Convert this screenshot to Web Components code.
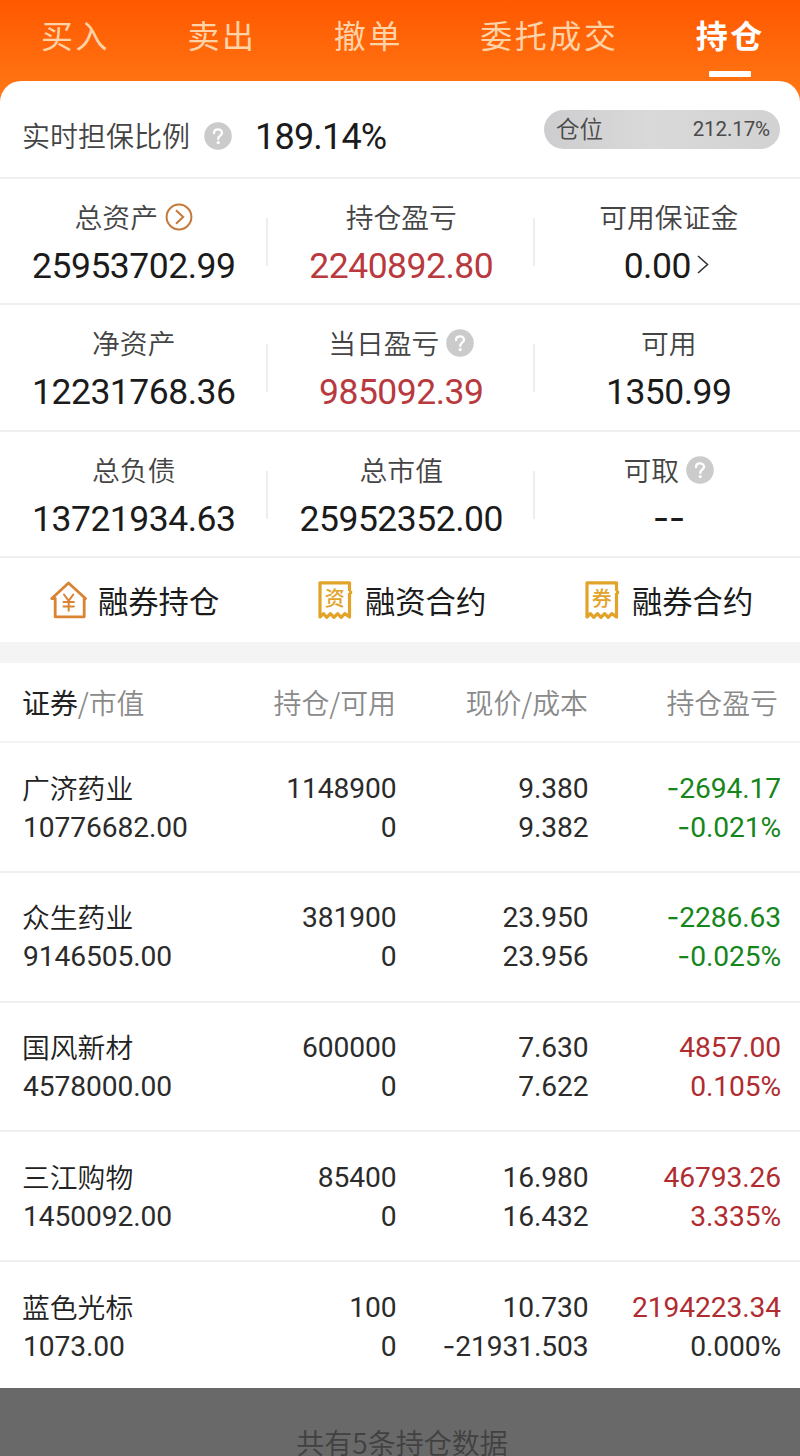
<!DOCTYPE html>
<html lang="zh-CN">
<head>
<meta charset="utf-8">
<meta name="viewport" content="width=device-width">
<title>持仓</title>
<style>
html, body { margin: 0; height: 1456px; overflow: hidden; }
body {
  background: #fff;
  color: #1b1b1b;
  --cjk: "Noto Sans CJK SC", sans-serif;
  --num: Roboto, "Noto Sans CJK SC", sans-serif;
  --line: #efeff0;
  --red: #b83a3e;
  font-family: var(--cjk);
}
</style>
</head>
<body>
<trade-page>
  <trade-tabs slot="tabs">
    <trade-tab>买入</trade-tab>
    <trade-tab>卖出</trade-tab>
    <trade-tab>撤单</trade-tab>
    <trade-tab>委托成交</trade-tab>
    <trade-tab active>持仓</trade-tab>
  </trade-tabs>

  <ratio-bar label="实时担保比例" value="189.14%">
    <position-pill label="仓位" value="212.17%"></position-pill>
  </ratio-bar>

  <summary-row>
    <summary-cell label="总资产" value="25953702.99"><go-icon slot="icon"></go-icon></summary-cell>
    <summary-cell label="持仓盈亏" value="2240892.80" tone="red"></summary-cell>
    <summary-cell label="可用保证金" value="0.00" link><chevron-icon slot="after"></chevron-icon></summary-cell>
  </summary-row>
  <summary-row>
    <summary-cell label="净资产" value="12231768.36"></summary-cell>
    <summary-cell label="当日盈亏" value="985092.39" tone="red"><help-icon slot="icon"></help-icon></summary-cell>
    <summary-cell label="可用" value="1350.99"></summary-cell>
  </summary-row>
  <summary-row>
    <summary-cell label="总负债" value="13721934.63"></summary-cell>
    <summary-cell label="总市值" value="25952352.00"></summary-cell>
    <summary-cell label="可取" value="--"><help-icon slot="icon"></help-icon></summary-cell>
  </summary-row>

  <link-row>
    <link-item kind="house">融券持仓</link-item>
    <link-item kind="bill" mark="资">融资合约</link-item>
    <link-item kind="bill" mark="券">融券合约</link-item>
  </link-row>

  <holding-list></holding-list>
  <list-footer slot="footer">共有5条持仓数据</list-footer>
</trade-page>

<script>
const define = (name, html, setup) => {
  const tpl = document.createElement('template')
  tpl.innerHTML = html
  customElements.define(name, class extends HTMLElement {
    constructor() {
      super()
      this.attachShadow({ mode: 'open' }).append(tpl.content.cloneNode(true))
    }
    connectedCallback() {
      if (setup) setup(this, s => this.shadowRoot.querySelector(s))
    }
  })
}

// minus signs are set in a face with a wider hyphen
const num = v => v.replace(/-/g, '<i>-</i>')

define('trade-page', `
<style>
:host { display: flex; flex-direction: column; width: 800px; height: 1456px;
  background: linear-gradient(#ff5800 0, #ff7312 84px, #ff7c22 105px, #fff 105px); }
main { flex: none; height: 1307px; background: #fff; border-radius: 21px 21px 0 0; }
</style>
<slot name="tabs"></slot>
<main><slot></slot></main>
<slot name="footer"></slot>`)

define('trade-tabs', `
<style>
:host { flex: none; display: flex; justify-content: space-between; height: 81px; padding: 0 35px 0 41px; box-sizing: border-box; }
</style>
<slot></slot>`)

define('trade-tab', `
<style>
:host { display: flex; flex-direction: column; align-items: center; font-size: 32px; letter-spacing: 2.6px; line-height: 68px; color: #ffd3a8; }
:host([active]) { color: #fff; font-weight: 700; }
i { display: none; width: 42px; height: 6px; margin-top: 3px; border-radius: 1px; background: #fff; }
:host([active]) i { display: block; }
</style>
<span><slot></slot></span><i></i>`)

define('help-icon', `
<style>
:host { display: block; width: 28px; height: 28px; }
svg { display: block; }
</style>
<svg width="28" height="28" viewBox="0 0 28 28">
  <circle cx="14" cy="14" r="13.8" fill="#cbcbcb"/>
  <path d="M10 11.2c0-2.3 1.7-3.8 4-3.8s4 1.5 4 3.5c0 2.7-3.8 3-3.8 6" fill="none" stroke="#fff" stroke-width="2.3" stroke-linecap="round"/>
  <circle cx="14.2" cy="20.6" r="1.6" fill="#fff"/>
</svg>`)

define('go-icon', `
<style>
:host { display: block; width: 28px; height: 28px; }
svg { display: block; }
</style>
<svg width="28" height="28" viewBox="0 0 28 28" fill="none" stroke="#c4793a" stroke-width="2">
  <circle cx="14" cy="14" r="12.4"/>
  <path d="M11 7.2l7.2 6.8-7.2 6.8"/>
</svg>`)

define('chevron-icon', `
<style>
:host { display: block; width: 12px; height: 20px; }
svg { display: block; }
</style>
<svg width="12" height="20" viewBox="0 0 12 20" fill="none" stroke="#333" stroke-width="1.6"><path d="M1 1l9.5 8.5L1 18"/></svg>`)

define('ratio-bar', `
<style>
:host { display: flex; align-items: center; height: 98px; box-sizing: border-box; padding: 14px 20px 0 22px; border-bottom: 2px solid var(--line); }
.label { margin-top: -2px; font-size: 28px; font-weight: 350; color: #444; line-height: 40px; }
help-icon { margin: 0 0 0 14px; }
.value { margin: 2px 0 0 23px; font: 36px/40px var(--num); letter-spacing: -.8px; }
::slotted(*) { margin-left: auto; margin-top: -13px; }
</style>
<span class="label"></span><help-icon></help-icon><span class="value"></span><slot></slot>`,
(el, $) => {
  $('.label').textContent = el.getAttribute('label')
  $('.value').textContent = el.getAttribute('value')
})

define('position-pill', `
<style>
:host { display: flex; justify-content: space-between; align-items: center; width: 236px; height: 39px; box-sizing: border-box;
  padding: 0 10px 0 12px; border-radius: 20px; background: linear-gradient(90deg, #cdcdcf, #d9d9da 45%, #d2d2d3); color: #4a4a4a; }
.label { margin-top: -3px; font-size: 23.6px; line-height: 36px; font-weight: 350; }
.value { font: 20.5px/39px var(--num); letter-spacing: -.1px; }
</style>
<span class="label"></span><span class="value"></span>`,
(el, $) => {
  $('.label').textContent = el.getAttribute('label')
  $('.value').textContent = el.getAttribute('value')
})

define('summary-row', `
<style>
:host { display: grid; grid-template-columns: repeat(3, 267.5px); height: 126px; box-sizing: border-box; border-bottom: 2px solid var(--line); }
:host(:nth-of-type(2)) { height: 127px; }
::slotted(:not(:last-child)) { background: linear-gradient(#eee, #eee) right 39px / 2px 48px no-repeat; }
</style>
<slot></slot>`)

define('summary-cell', `
<style>
:host { display: flex; flex-direction: column; align-items: center; padding-top: 16px; }
div { display: flex; align-items: center; justify-content: center; }
.top { gap: 7px; height: 44px; font-size: 27.8px; font-weight: 350; color: #444; }
.label { line-height: 40px; margin-top: -2px; }
.bottom { gap: 6px; height: 54px; padding-left: 6px; font: 35.5px/54px var(--num); letter-spacing: -.5px; }
:host([link]) .bottom { padding: 0 5px 0 0; }
:host([tone=red]) .bottom { color: var(--red); }
i { font: normal 36px/52px Inter, sans-serif; }
slot[name=after] { display: block; margin-top: -2px; }
</style>
<div class="top"><span class="label"></span><slot name="icon"></slot></div>
<div class="bottom"><span class="value"></span><slot name="after"></slot></div>`,
(el, $) => {
  $('.label').textContent = el.getAttribute('label')
  $('.value').innerHTML = num(el.getAttribute('value'))
})

define('link-row', `
<style>
:host { display: grid; grid-template-columns: repeat(3, 267px); height: 105px; box-sizing: border-box; border-bottom: 21px solid #f4f4f5; }
</style>
<slot></slot>`)

define('link-item', `
<style>
:host { display: flex; align-items: center; gap: 10px; padding-left: 50px; font-size: 30.3px; line-height: 40px; }
svg { flex: none; display: block; }
span { margin-top: -1px; }
.house, .bill { display: none; }
:host([kind=house]) .house, :host([kind=bill]) .bill { display: block; }
</style>
<svg class="house" width="38" height="40" viewBox="0 0 38 40" fill="none" stroke="#d98432" stroke-width="2.8" stroke-linejoin="round" stroke-linecap="round">
  <path d="M1.8 18.5L18.5 3l17 15.5M1.8 18.5h3.4v18.3h29V18.5h1.3"/>
  <path d="M14 14.5l4.7 6.3 4.6-6.3M18.7 20.8v10M13.5 22h10.4M13.5 26.4h10.4" stroke-width="2"/>
</svg>
<svg class="bill" width="38" height="40" viewBox="0 0 38 40" fill="none" stroke="#e2a32a" stroke-width="3.2" stroke-linejoin="round">
  <path d="M32.5 11V2.8H3V37l3.4-3.4 3.4 3.8 3.6-3.8 3.6 3.8 3.6-3.8 3.6 3.8 3.6-3.8 4.7 3.4V13"/>
  <path d="M32 12.5h3.2"/>
  <text x="17.8" y="26.2" text-anchor="middle" font-size="20" font-weight="500" stroke="none" fill="#e2a32a"></text>
</svg>
<span><slot></slot></span>`,
(el, $) => {
  if (el.getAttribute('mark')) $('text').textContent = el.getAttribute('mark')
})

define('holding-row', `
<style>
:host { display: grid; grid-template-columns: 182px 192.5px 192px 192.5px; height: 129.75px; box-sizing: border-box; padding: 25.5px 0 0 22px;
  border-bottom: 2px solid var(--line); font: 28.2px/39px var(--num); color: #2b2b2b; grid-template-rows: 39px 39px; letter-spacing: -.1px; }
:host(:last-of-type) { border-bottom: 0; }
span { text-align: right; white-space: nowrap; }
span:nth-of-type(4n+1) { text-align: left; }
span:nth-of-type(5) { padding-left: 1px; }
.name { margin-top: -1px; font: 350 27.8px/39px var(--cjk); letter-spacing: 0; color: #222; }
.green { color: #15861b; }
.red { color: #b02c30; }
i { font: normal 28px/39px Inter, sans-serif; }
</style>`,
(el) => {
  const [name, worth, held, free, price, cost, gain, pct, t1, t2] = el.data
  const cells = [[name, 'name'], [held], [price], [gain, t1], [worth], [free], [cost], [pct, t2]]
  cells.forEach(([v, c = '']) => {
    el.shadowRoot.innerHTML += `<span class="${c}">${num(v)}</span>`
  })
})

define('holding-list', `
<style>
:host { display: block; }
header { display: grid; grid-template-columns: 182px 192px 192px 190px; height: 80px; box-sizing: border-box; padding-left: 22px;
  border-bottom: 2px solid #f4f4f5; font-size: 27.9px; font-weight: 350; line-height: 79px; color: #8a8a8a; }
header span { text-align: right; }
header span:first-child { text-align: left; }
b { font-weight: 400; color: #222; }
</style>
<header><span><b>证券</b>/市值</span><span>持仓/可用</span><span>现价/成本</span><span>持仓盈亏</span></header>`,
(el) => {
  const rows = [
    ['广济药业', '10776682.00', '1148900', '0', '9.380', '9.382', '-2694.17', '-0.021%', 'green', 'green'],
    ['众生药业', '9146505.00', '381900', '0', '23.950', '23.956', '-2286.63', '-0.025%', 'green', 'green'],
    ['国风新材', '4578000.00', '600000', '0', '7.630', '7.622', '4857.00', '0.105%', 'red', 'red'],
    ['三江购物', '1450092.00', '85400', '0', '16.980', '16.432', '46793.26', '3.335%', 'red', 'red'],
    ['蓝色光标', '1073.00', '100', '0', '10.730', '-21931.503', '2194223.34', '0.000%', 'red', '']
  ]
  rows.forEach(data => {
    const row = document.createElement('holding-row')
    row.data = data
    el.shadowRoot.append(row)
  })
})

define('list-footer', `
<style>
:host { flex: none; display: block; height: 68px; padding: 40px 0 0 4px; box-sizing: border-box; background: #696969;
  text-align: center; font-size: 28px; line-height: 28px; font-weight: 350; color: #414141; }
span { display: block; height: 28px; }
</style>
<span><slot></slot></span>`)
</script>
</body>
</html>
